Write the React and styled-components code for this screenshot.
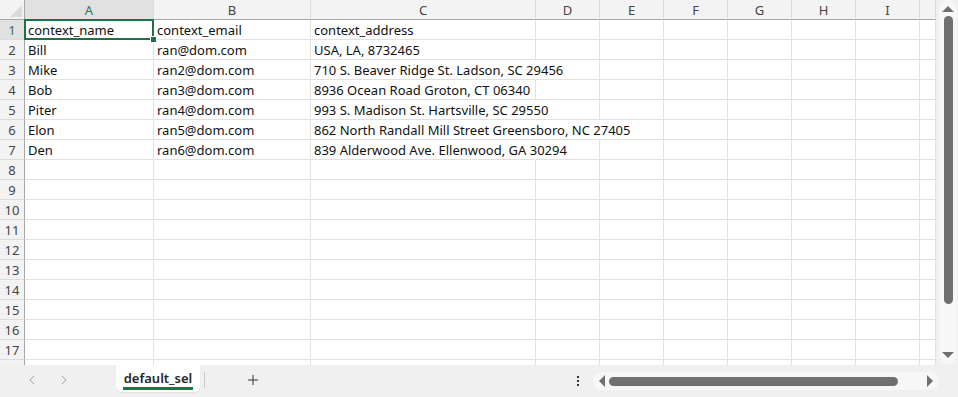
import React from 'react';
import styled, { createGlobalStyle } from 'styled-components';
import { ChevronLeft, ChevronRight, Plus } from 'lucide-react';

const GlobalStyle = createGlobalStyle`
  html, body {
    margin: 0;
    padding: 0;
    background: #ffffff;
    overflow: hidden;
  }
  body {
    font-family: "Noto Sans", "Open Sans", sans-serif;
  }
`;

const COLS = [
  { key: 'A', width: 129 },
  { key: 'B', width: 157 },
  { key: 'C', width: 225 },
  { key: 'D', width: 64 },
  { key: 'E', width: 64 },
  { key: 'F', width: 64 },
  { key: 'G', width: 64 },
  { key: 'H', width: 64 },
  { key: 'I', width: 64 },
  { key: '', width: 16 },
];

// [name, email, address, how many columns the address spills over]
const DATA = [
  ['context_name', 'context_email', 'context_address', 0],
  ['Bill', 'ran@dom.com', 'USA, LA, 8732465', 0],
  ['Mike', 'ran2@dom.com', '710 S. Beaver Ridge St. Ladson, SC 29456', 1],
  ['Bob', 'ran3@dom.com', '8936 Ocean Road Groton, CT 06340', 0],
  ['Piter', 'ran4@dom.com', '993 S. Madison St. Hartsville, SC 29550', 1],
  ['Elon', 'ran5@dom.com', '862 North Randall Mill Street Greensboro, NC 27405', 2],
  ['Den', 'ran6@dom.com', '839 Alderwood Ave. Ellenwood, GA 30294', 1],
];

const ROW_COUNT = 18;

const Window = styled.div`
  width: 958px;
  height: 397px;
  display: flex;
  flex-direction: column;
  background: #f0f0f0;
`;

const Main = styled.div`
  height: 365px;
  display: flex;
`;

const GridArea = styled.div`
  width: 936px;
  height: 365px;
  overflow: hidden;
  background: #ffffff;
`;

const Sheet = styled.div`
  display: grid;
  grid-template-columns: 25px ${COLS.map(c => c.width + 'px').join(' ')};
  grid-auto-rows: 20px;
  width: max-content;
`;

const Corner = styled.div`
  position: relative;
  background: #f3f3f3;
  border-right: 1px solid #a6a6a6;
  border-bottom: 1px solid #a6a6a6;
  box-sizing: border-box;

  &::after {
    content: '';
    position: absolute;
    right: 2px;
    bottom: 2px;
    width: 0;
    height: 0;
    border-left: 12px solid transparent;
    border-bottom: 12px solid #dadada;
  }
`;

const ColHeader = styled.div`
  box-sizing: border-box;
  background: ${p => (p.selected ? '#e1e1e1' : '#f3f3f3')};
  border-right: 1px solid #dcdcdc;
  border-bottom: 1px solid #a6a6a6;
  color: ${p => (p.selected ? '#3f6e50' : '#444444')};
  font-size: 13px;
  display: flex;
  align-items: center;
  justify-content: center;
  padding-top: 1px;
`;

const RowHeader = styled.div`
  box-sizing: border-box;
  background: ${p => (p.selected ? '#e1e1e1' : '#f3f3f3')};
  border-right: 1px solid #a6a6a6;
  border-bottom: 1px solid #dcdcdc;
  color: ${p => (p.selected ? '#3f6e50' : '#444444')};
  font-size: 13px;
  display: flex;
  align-items: center;
  justify-content: center;
`;

const Cell = styled.div`
  position: relative;
  box-sizing: border-box;
  border-right: 1px solid ${p => (p.spilled ? 'transparent' : '#e1e1e1')};
  border-bottom: 1px solid #e1e1e1;
  font-size: 13px;
  color: #111111;
  padding: 0 3px;
  white-space: nowrap;
  display: flex;
  align-items: center;
  z-index: ${p => (p.active ? 2 : 'auto')};

  ${p =>
    p.active &&
    `
    &::before {
      content: '';
      position: absolute;
      left: -1px;
      top: -1px;
      right: -1px;
      bottom: -1px;
      border: 2px solid #1f7145;
      pointer-events: none;
    }
    &::after {
      content: '';
      position: absolute;
      right: -4px;
      bottom: -4px;
      width: 5px;
      height: 5px;
      background: #1f7145;
      border: 1px solid #ffffff;
    }
  `}
`;

const VScroll = styled.div`
  width: 22px;
  height: 365px;
  background: #f0f0f0;
  display: flex;
  justify-content: center;
`;

const VTrack = styled.div`
  width: 18px;
  margin-left: 2px;
  height: 364px;
  border-radius: 9px;
  background: #f7f7f7;
  display: flex;
  flex-direction: column;
  align-items: center;
  padding: 4px 0;
  box-sizing: border-box;
`;

const VThumb = styled.div`
  width: 9px;
  height: 288px;
  margin-top: 4px;
  border-radius: 5px;
  background: #707070;
`;

const Spacer = styled.div`
  flex: 1;
`;

const Arrow = styled.div`
  width: 0;
  height: 0;
  flex-shrink: 0;
  ${p => p.dir === 'up' && `border-left: 6px solid transparent; border-right: 6px solid transparent; border-bottom: 6px solid #707070; margin-top: 2px;`}
  ${p => p.dir === 'down' && `border-left: 6px solid transparent; border-right: 6px solid transparent; border-top: 6px solid #707070; margin-bottom: 2px;`}
  ${p => p.dir === 'left' && `border-top: 6px solid transparent; border-bottom: 6px solid transparent; border-right: 6px solid #707070;`}
  ${p => p.dir === 'right' && `border-top: 6px solid transparent; border-bottom: 6px solid transparent; border-left: 6px solid #707070;`}
`;

const BottomBar = styled.div`
  height: 32px;
  display: flex;
  align-items: flex-start;
  background: #f0f0f0;

  & > * {
    flex-shrink: 0;
  }
`;

const NavButtons = styled.div`
  width: 116px;
  height: 30px;
  display: flex;
  align-items: center;
  padding-left: 24px;
  gap: 16px;
  box-sizing: border-box;
  color: #a3a3a3;
`;

const Tab = styled.div`
  width: 84px;
  height: 27px;
  background: #ffffff;
  border-radius: 0 0 6px 6px;
  display: flex;
  flex-direction: column;
  align-items: center;
  justify-content: center;
  box-shadow: 0 1px 1px rgba(0, 0, 0, 0.06);
`;

const TabLabel = styled.span`
  font-size: 13px;
  font-weight: 600;
  color: #262626;
  line-height: 18px;
  border-bottom: 3px solid #107c41;
  padding: 0 1px;
  margin-top: 1px;
`;

const Separator = styled.div`
  width: 1px;
  height: 16px;
  background: #c8c8c8;
  margin: 7px 0 0 4px;
`;

const AddButton = styled.div`
  width: 95px;
  height: 30px;
  display: flex;
  align-items: center;
  justify-content: center;
  color: #333333;
`;

const BottomSpacer = styled.div`
  flex: 1;
  flex-shrink: 1 !important;
`;

const MoreDots = styled.div`
  width: 16px;
  display: flex;
  flex-direction: column;
  align-items: center;
  gap: 2px;
  margin-top: 11px;

  span {
    width: 2px;
    height: 2px;
    background: #333333;
  }
`;

const HTrack = styled.div`
  margin: 7px 19px 0 7px;
  width: 346px;
  height: 18px;
  border-radius: 9px;
  background: #f7f7f7;
  display: flex;
  align-items: center;
  padding: 0 6px;
  box-sizing: border-box;
`;

const HThumb = styled.div`
  height: 9px;
  width: 289px;
  margin-left: 4px;
  border-radius: 5px;
  background: #707070;
`;

const App = () => {
  const rows = Array.from({ length: ROW_COUNT }, (_, i) => i);

  return (
    <>
      <GlobalStyle />
      <Window>
        <Main>
          <GridArea>
            <Sheet>
              <Corner />
              {COLS.map((c, i) => (
                <ColHeader key={i} selected={i === 0}>{c.key}</ColHeader>
              ))}
              {rows.map(r => {
                const row = DATA[r];
                const spill = row ? row[3] : 0;
                return (
                  <React.Fragment key={r}>
                    <RowHeader selected={r === 0}>{r < ROW_COUNT - 1 ? r + 1 : ''}</RowHeader>
                    {COLS.map((c, ci) => (
                      <Cell
                        key={ci}
                        active={r === 0 && ci === 0}
                        spilled={ci >= 2 && ci < 2 + spill}
                      >
                        {row && ci < 3 ? row[ci] : ''}
                      </Cell>
                    ))}
                  </React.Fragment>
                );
              })}
            </Sheet>
          </GridArea>
          <VScroll>
            <VTrack>
              <Arrow dir="up" />
              <VThumb />
              <Spacer />
              <Arrow dir="down" />
            </VTrack>
          </VScroll>
        </Main>
        <BottomBar>
          <NavButtons>
            <ChevronLeft size={16} strokeWidth={1.5} />
            <ChevronRight size={16} strokeWidth={1.5} />
          </NavButtons>
          <Tab>
            <TabLabel>default_sel</TabLabel>
          </Tab>
          <Separator />
          <AddButton>
            <Plus size={16} strokeWidth={1.5} />
          </AddButton>
          <BottomSpacer />
          <MoreDots>
            <span />
            <span />
            <span />
          </MoreDots>
          <HTrack>
            <Arrow dir="left" />
            <HThumb />
            <Spacer />
            <Arrow dir="right" />
          </HTrack>
        </BottomBar>
      </Window>
    </>
  );
};

export default App;
